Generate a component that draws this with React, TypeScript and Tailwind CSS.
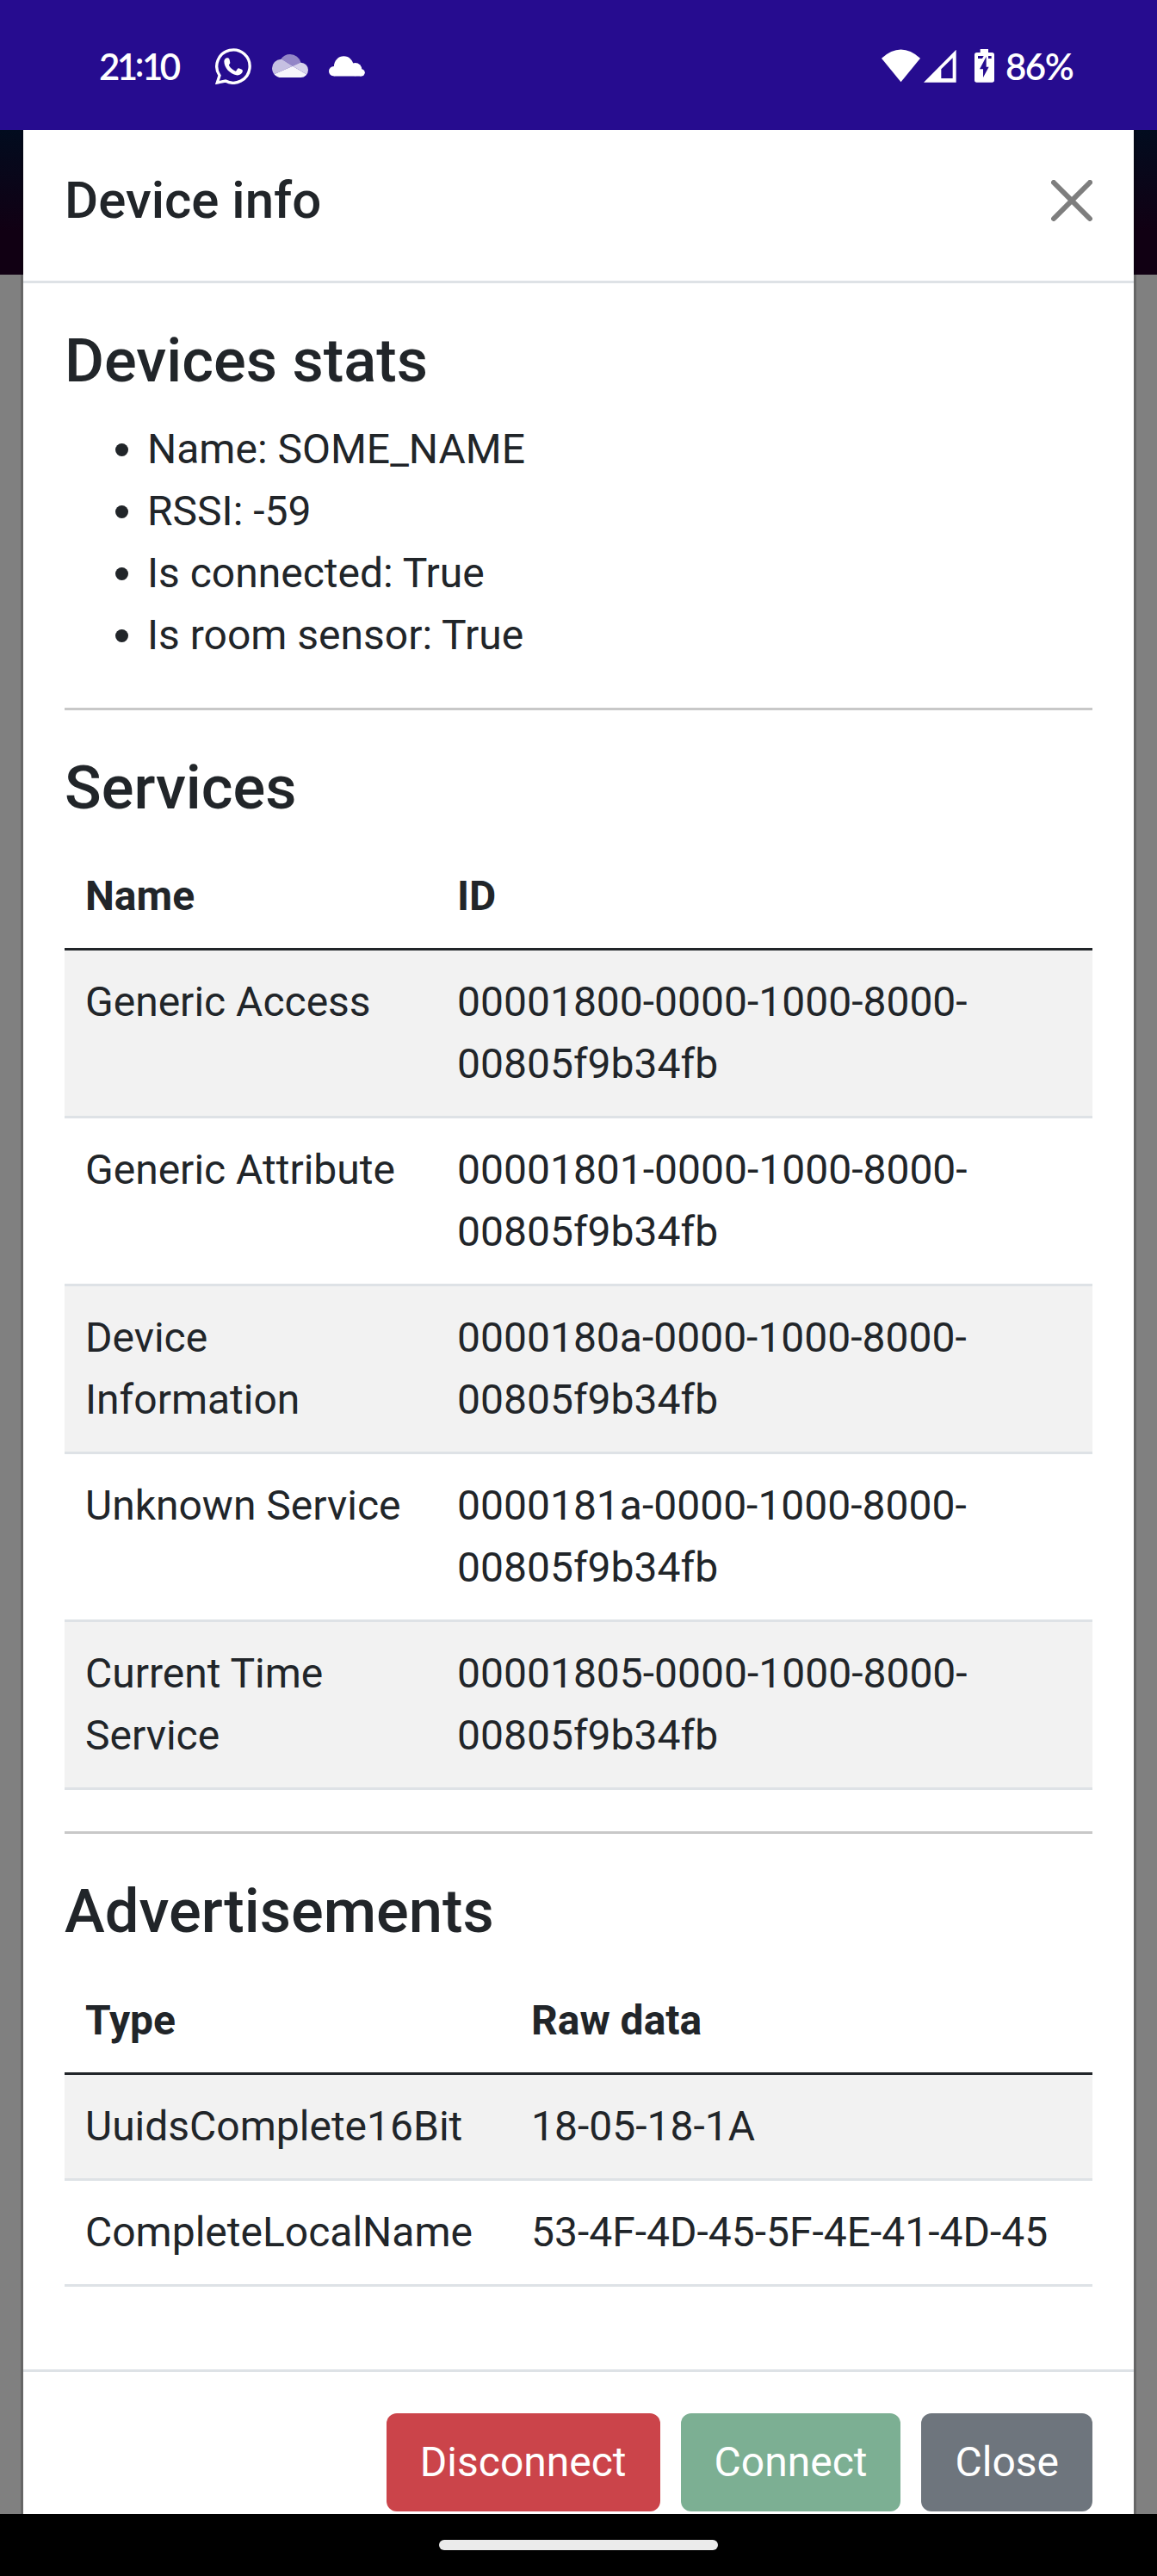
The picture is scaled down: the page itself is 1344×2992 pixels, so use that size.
import React from "react";

const stats = ["Name: SOME_NAME", "RSSI: -59", "Is connected: True", "Is room sensor: True"];

const services = [
  ["Generic Access", "00001800-0000-1000-8000-00805f9b34fb"],
  ["Generic Attribute", "00001801-0000-1000-8000-00805f9b34fb"],
  ["Device Information", "0000180a-0000-1000-8000-00805f9b34fb"],
  ["Unknown Service", "0000181a-0000-1000-8000-00805f9b34fb"],
  ["Current Time Service", "00001805-0000-1000-8000-00805f9b34fb"],
];

const advertisements = [
  ["UuidsComplete16Bit", "18-05-18-1A"],
  ["CompleteLocalName", "53-4F-4D-45-5F-4E-41-4D-45"],
];

function WhatsAppIcon() {
  return (
    <svg className="ml-[41px] h-[42px] w-[42px]" viewBox="750 167 126 126">
      <path
        d="M757 287 L765 262 A57.5 57.5 0 1 1 786 281 Z"
        fill="none"
        stroke="#fff"
        strokeWidth="10"
        strokeLinejoin="miter"
      />
      <path
        d="M781 213 C781 206 786 201 792 201 C799 201 800 206 802 218 C802 222 797 223 798 227 C803 237 812 243 821 247 C826 247 826 236 832 237 L843 241 C847 243 846 249 843 253 C838 259 831 262 824 261 C802 257 781 236 781 213 Z"
        fill="#fff"
      />
    </svg>
  );
}

function OneDriveIcon() {
  return (
    <svg className="ml-6 h-[27px] w-[42px]" viewBox="948 189 126 81">
      <defs>
        <clipPath id="cloud">
          <circle cx="1011" cy="228" r="39" />
          <circle cx="980" cy="238" r="32" />
          <circle cx="1048" cy="244" r="26" />
          <rect x="980" y="230" width="68" height="40" />
        </clipPath>
      </defs>
      <g clipPath="url(#cloud)" fill="#fff">
        <polygon points="940,180 1080,180 1080,203 1020,230 983,207 940,207" opacity="0.5" />
        <polygon points="940,207 983,207 1020,230 940,265" opacity="0.74" />
        <polygon points="1020,230 1080,203 1080,266" opacity="0.82" />
        <polygon points="940,265 1020,230 1080,266 1080,275 940,275" opacity="0.96" />
      </g>
    </svg>
  );
}

function CloudIcon() {
  return (
    <svg className="ml-6 h-[24px] w-[42px]" viewBox="1146 190 126 72" fill="#fff">
      <circle cx="1198" cy="225" r="34" />
      <circle cx="1163" cy="243" r="17" />
      <circle cx="1238" cy="237" r="23" />
      <circle cx="1259" cy="248" r="12.5" />
      <rect x="1163" y="235" width="96" height="25.5" />
    </svg>
  );
}

function WifiIcon() {
  return (
    <svg className="h-[39px] w-[45px]" viewBox="132 171 135 117" fill="#fff">
      <path d="M199.500 286 L132 203 Q199.500 142 267 203 Z" />
    </svg>
  );
}

function SignalIcon() {
  return (
    <svg className="ml-1 h-[39px] w-[38px]" viewBox="279 171 114 117" fill="#fff">
      <path fillRule="evenodd" d="M279 287 L392 287 L392 173 Z M340 241 L340 273 L380 273 L380 202 Z" />
    </svg>
  );
}

function BatteryIcon() {
  return (
    <svg className="ml-[21px] h-[39px] w-[23px]" viewBox="456 171 69 117">
      <path
        d="M476 171 H504 V183 H517 Q525 183 525 191 V279 Q525 287 517 287 H464 Q456 287 456 279 V191 Q456 183 464 183 H476 Z"
        fill="#fff"
      />
      <path
        d="M468 195 H488 L483 204 H468 Z M504 195 H515 V204 H504 Z M497 197 L497 233 L506 233 L486 270 L486 241 L474 241 Z"
        fill="#260c8f"
      />
    </svg>
  );
}

function StatusBar() {
  return (
    <div className="flex h-[151px] shrink-0 items-center bg-[#260c8f] pt-[2px] pr-[96px] pl-[115px] font-['Lato',sans-serif] text-[42px] leading-none font-semibold text-white">
      <span className="flex w-[94px]">
        <span className="tracking-[-3.5px]">21</span>
        <span className="-mt-1 tracking-[-2.5px]">:</span>
        <span className="tracking-[-3.5px]">10</span>
      </span>
      <WhatsAppIcon />
      <OneDriveIcon />
      <CloudIcon />
      <div className="ml-auto flex items-center">
        <WifiIcon />
        <SignalIcon />
        <BatteryIcon />
        <span className="ml-[13px] w-[80px] tracking-[-1.5px]">86%</span>
      </div>
    </div>
  );
}

function Heading({ children }: { children: React.ReactNode }) {
  return <h3 className="mb-6 text-[70.464px] leading-[1.2] font-medium">{children}</h3>;
}

function Divider() {
  return <hr className="my-12 h-[3px] border-0 bg-[#c8c8c8]" />;
}

function DataTable({ columns, rows, first }: { columns: string[]; rows: string[][]; first: string }) {
  return (
    <table className="mb-12 w-full table-fixed border-separate border-spacing-0 text-left align-top">
      <thead>
        <tr>
          {columns.map((c, i) => (
            <th key={c} className={`border-b-[3px] border-[#212529] p-6 font-bold ${i === 0 ? first : ""}`}>
              {c}
            </th>
          ))}
        </tr>
      </thead>
      <tbody>
        {rows.map((row) => (
          <tr key={row[0]} className="odd:bg-[#f2f2f2]">
            {row.map((cell) => (
              <td key={cell} className="border-b-[3px] border-[#dee2e6] p-6 align-top">
                {cell}
              </td>
            ))}
          </tr>
        ))}
      </tbody>
    </table>
  );
}

function Button({ children, color }: { children: React.ReactNode; color: string }) {
  return <button className={`h-[114px] rounded-xl px-[39px] text-white ${color}`}>{children}</button>;
}

export default function App() {
  return (
    <div className="flex h-[2992px] w-[1344px] flex-col overflow-hidden bg-black font-['Roboto',sans-serif] text-[48px] leading-[72px] text-[#212529]">
      <StatusBar />
      <main className="h-[2769px] shrink-0 overflow-hidden bg-[#808080] bg-[linear-gradient(#020c1f,#110013_70%)] bg-[length:100%_168px] bg-no-repeat px-6">
        <section className="h-full border-x-[3px] border-black/20 bg-white bg-clip-padding">
          <header className="flex items-center justify-between border-b-[3px] border-[#dee2e6] px-12 pt-[37px] pb-12">
            <h5 className="text-[60px] leading-[90px] font-medium">Device info</h5>
            <button aria-label="Close">
              <svg className="h-12 w-12 opacity-50" viewBox="0 0 16 16" fill="#000">
                <path d="M.293.293a1 1 0 011.414 0L8 6.586 14.293.293a1 1 0 111.414 1.414L9.414 8l6.293 6.293a1 1 0 01-1.414 1.414L8 9.414l-6.293 6.293a1 1 0 01-1.414-1.414L6.586 8 .293 1.707a1 1 0 010-1.414z" />
              </svg>
            </button>
          </header>
          <div className="p-12">
            <Heading>Devices stats</Heading>
            <ul className="mb-12 list-disc pl-24">
              {stats.map((s) => (
                <li key={s}>{s}</li>
              ))}
            </ul>
            <Divider />
            <Heading>Services</Heading>
            <DataTable columns={["Name", "ID"]} rows={services} first="w-[432px]" />
            <Divider />
            <Heading>Advertisements</Heading>
            <DataTable columns={["Type", "Raw data"]} rows={advertisements} first="w-[518px]" />
          </div>
          <footer className="flex justify-end gap-6 border-t-[3px] border-[#dee2e6] p-12">
            <Button color="bg-[#cb444a]">Disconnect</Button>
            <Button color="bg-[#7caf93]">Connect</Button>
            <Button color="bg-[#6e757d]">Close</Button>
          </footer>
        </section>
      </main>
      <div className="flex flex-1 items-start justify-center pt-[30px]">
        <div className="h-3 w-[324px] rounded-full bg-[#ebebeb]" />
      </div>
    </div>
  );
}
